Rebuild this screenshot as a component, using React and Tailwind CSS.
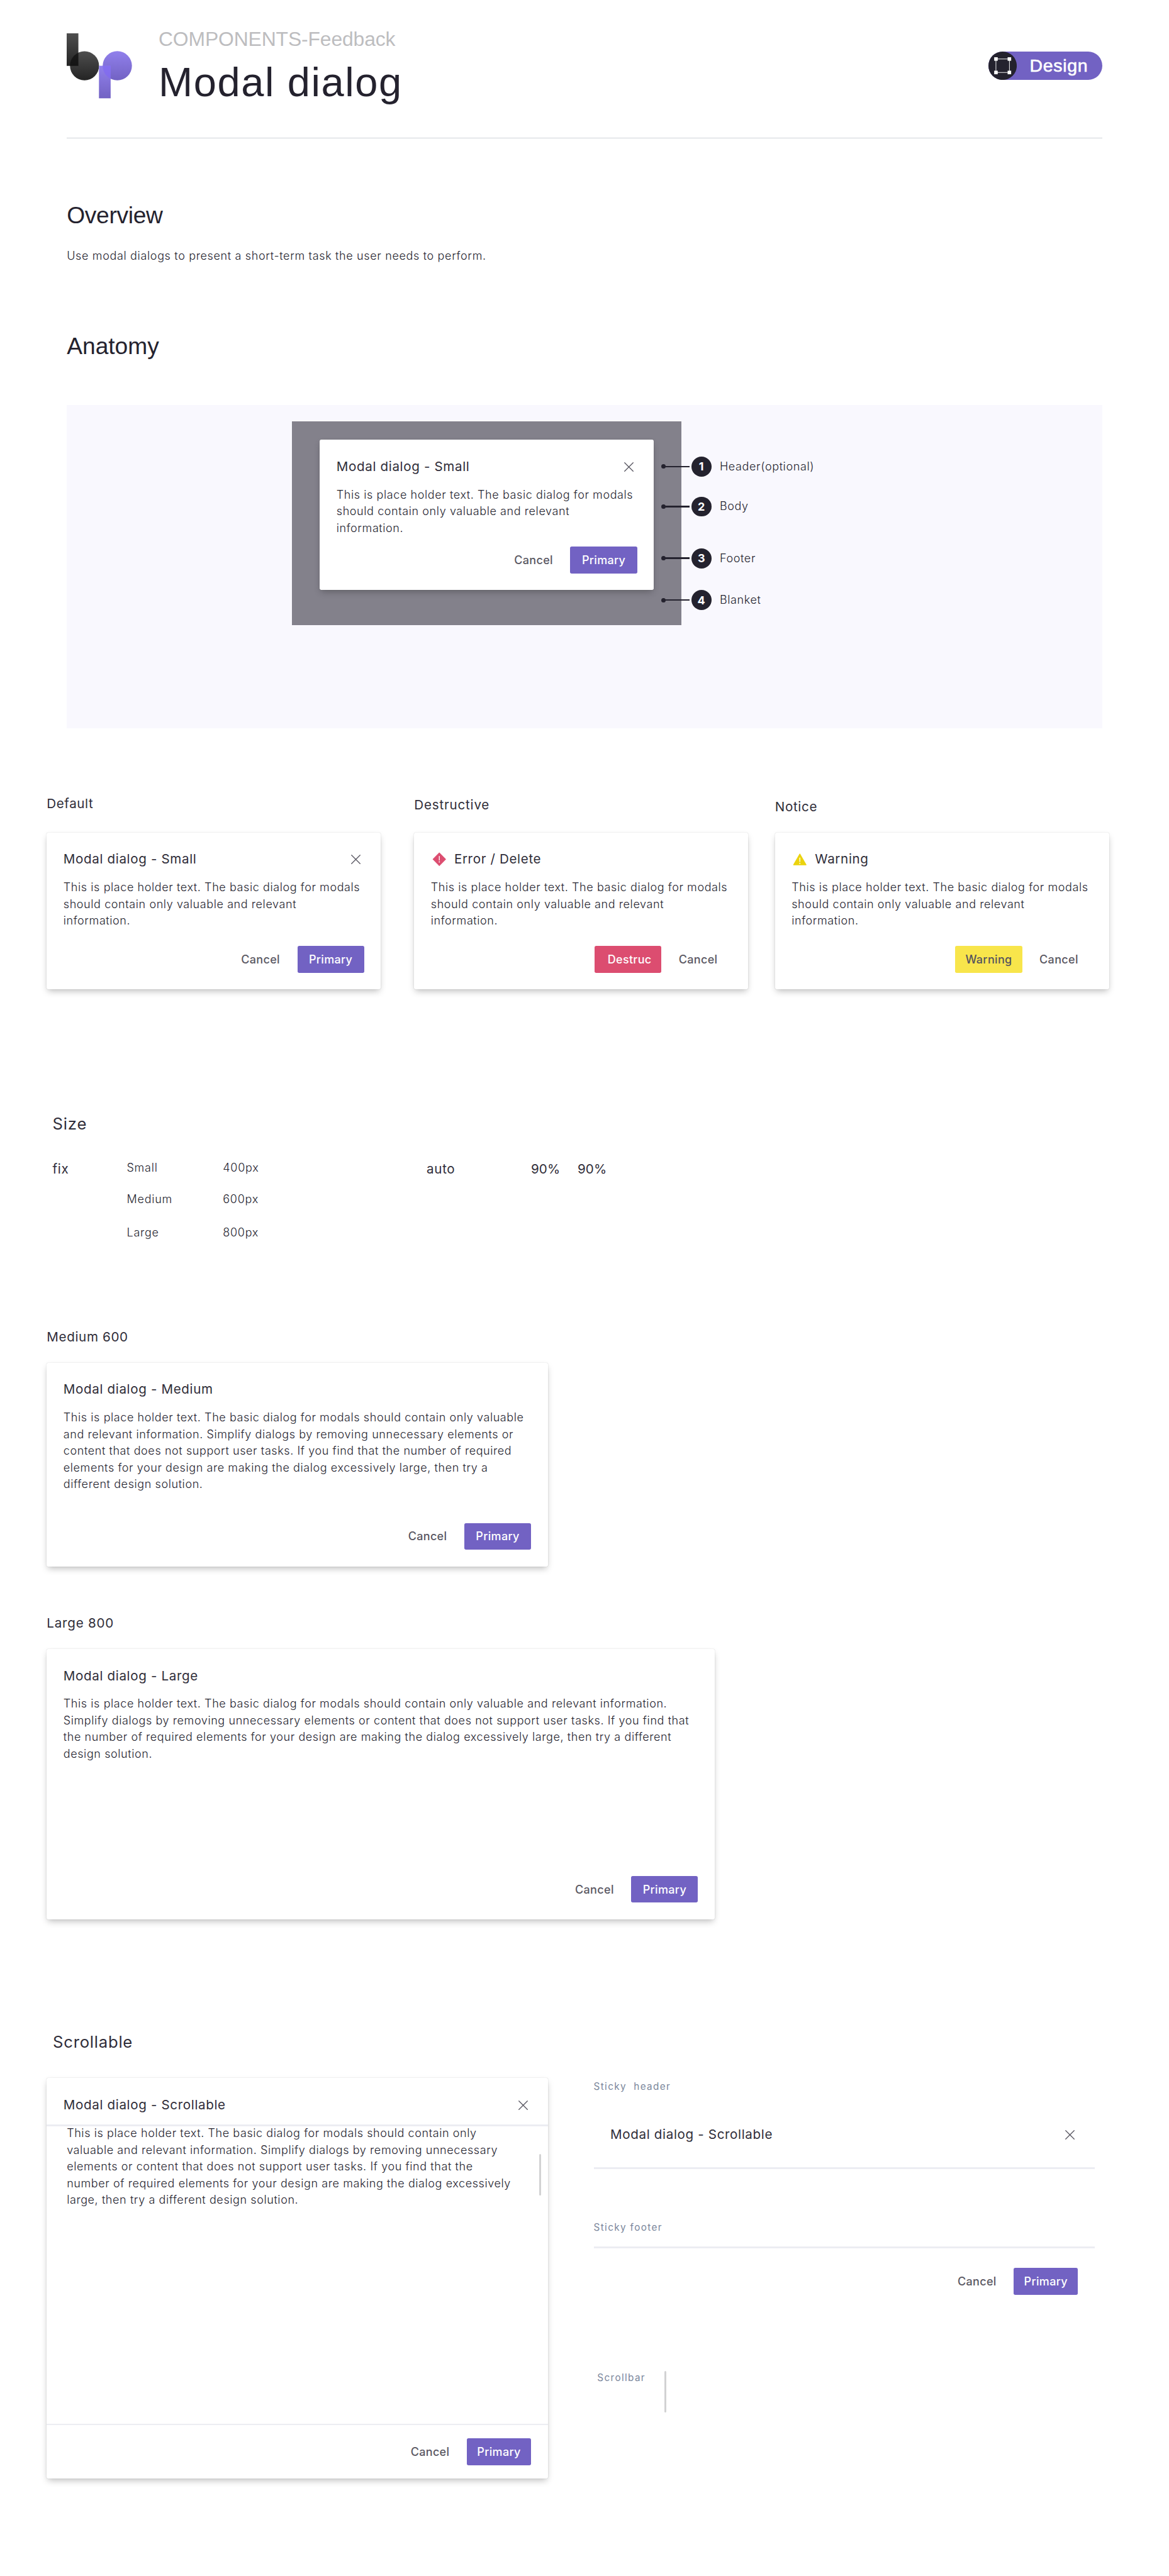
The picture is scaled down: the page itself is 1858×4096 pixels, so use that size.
import React from 'react';

const SMALL_TEXT = [
  'This is place holder text. The basic dialog for modals',
  'should contain only valuable and relevant',
  'information.',
];

const MEDIUM_TEXT = [
  'This is place holder text. The basic dialog for modals should contain only valuable',
  'and relevant information. Simplify dialogs by removing unnecessary elements or',
  'content that does not support user tasks. If you find that the number of required',
  'elements for your design are making the dialog excessively large, then try a',
  'different design solution.',
];

const LARGE_TEXT = [
  'This is place holder text. The basic dialog for modals should contain only valuable and relevant information.',
  'Simplify dialogs by removing unnecessary elements or content that does not support user tasks. If you find that',
  'the number of required elements for your design are making the dialog excessively large, then try a different',
  'design solution.',
];

const SCROLL_TEXT = [
  'This is place holder text. The basic dialog for modals should contain only',
  'valuable and relevant information. Simplify dialogs by removing unnecessary',
  'elements or content that does not support user tasks. If you find that the',
  'number of required elements for your design are making the dialog excessively',
  'large, then try a different design solution.',
];

function Logo() {
  return (
    <svg viewBox="0 0 156 156" className="mt-[53.1px] h-[103.5px] w-[103.5px] shrink-0 overflow-visible">
      <defs>
        <linearGradient id="ink" x1="0" y1="0" x2="0" y2="1">
          <stop offset="0" stopColor="#111111" stopOpacity="0.74" />
          <stop offset="1" stopColor="#111111" stopOpacity="0.92" />
        </linearGradient>
        <linearGradient id="violet" x1="0" y1="0" x2="0" y2="1">
          <stop offset="0" stopColor="#9180ec" />
          <stop offset="1" stopColor="#7262c3" />
        </linearGradient>
        <clipPath id="bowl">
          <circle cx="121.3" cy="77.7" r="35" />
        </clipPath>
      </defs>
      <circle cx="42.7" cy="77.7" r="34.8" fill="url(#ink)" />
      <rect width="28" height="78" fill="url(#ink)" />
      <circle cx="121.3" cy="77.7" r="35" fill="url(#violet)" />
      <rect x="77.3" y="77.7" width="28" height="78" fill="url(#violet)" />
      <rect x="77.3" y="77.7" width="28" height="78" fill="#8069f0" opacity="0.75" clipPath="url(#bowl)" />
    </svg>
  );
}

function FrameIcon() {
  return (
    <svg viewBox="0 0 68 68" className="h-[45.1px] w-[45.1px] shrink-0">
      <circle cx="34" cy="34" r="34" fill="#24222e" />
      <rect x="18" y="17.8" width="32.3" height="32.3" fill="none" stroke="#ffffff" strokeWidth="1.4" />
      <g fill="#ffffff">
        <rect x="13.8" y="13.6" width="8.5" height="8.5" />
        <rect x="46" y="13.6" width="8.5" height="8.5" />
        <rect x="13.8" y="45.9" width="8.5" height="8.5" />
        <rect x="46" y="45.9" width="8.5" height="8.5" />
      </g>
    </svg>
  );
}

function CloseIcon() {
  return (
    <svg viewBox="0 0 40 40" className="h-[26.5px] w-[26.5px] shrink-0" fill="none" stroke="#55535e" strokeWidth="2" strokeLinecap="round">
      <path d="M10.2 10.2L30.6 30.6M30.6 10.2L10.2 30.6" />
    </svg>
  );
}

function ErrorIcon() {
  return (
    <svg viewBox="0 0 40 40" className="mr-[10.6px] h-[26.5px] w-[26.5px] shrink-0">
      <path d="M20 4.8L35.2 20L20 35.2L4.8 20Z" fill="#dc4d70" stroke="#dc4d70" strokeWidth="1.6" strokeLinejoin="round" />
      <path d="M20 13V22.2" stroke="#ffffff" strokeWidth="2" strokeLinecap="round" />
      <circle cx="20" cy="26.4" r="1.4" fill="#ffffff" />
    </svg>
  );
}

function WarningIcon() {
  return (
    <svg viewBox="0 0 40 40" className="mr-[10.6px] h-[26.5px] w-[26.5px] shrink-0">
      <path d="M20 7.6L34.8 33.4H5.2Z" fill="#ebd30e" stroke="#ebd30e" strokeWidth="2.2" strokeLinejoin="round" />
      <path d="M20 17V25.6" stroke="#ffffff" strokeWidth="2" strokeLinecap="round" />
      <circle cx="20" cy="30" r="1.4" fill="#ffffff" />
    </svg>
  );
}

function Title({ children }) {
  return <h3 className="text-[20.6px] leading-[26.5px] tracking-[0.64px] whitespace-nowrap text-[#2f2d39]">{children}</h3>;
}

function Body({ lines }) {
  return (
    <p className="text-[18px] leading-[26.54px] font-light tracking-[0.585px] whitespace-nowrap text-[#25242f]">
      {lines.map((line) => (
        <span key={line} className="block">{line}</span>
      ))}
    </p>
  );
}

const BUTTON = 'flex h-[42.5px] shrink-0 items-center justify-center rounded-[2.7px] text-[18px] font-medium tracking-[0.33px]';

function Cancel() {
  return <button className={`${BUTTON} w-[106.2px] text-[#595762]`}>Cancel</button>;
}

function Primary({ narrow }) {
  return <button className={`${BUTTON} bg-[#7262c3] text-white ${narrow ? 'w-[102.2px]' : 'w-[106.2px]'}`}>Primary</button>;
}

const SHADOW = 'shadow-[0_5.3px_10.6px_-2.6px_rgba(0,0,0,0.26),0_0_1.4px_rgba(0,0,0,0.22)]';

function Dialog({ size, icon, title, close, lines, children }) {
  return (
    <div className={`flex flex-col rounded-[2.7px] bg-white px-[26.5px] pt-[29.7px] pb-[26.5px] ${SHADOW} ${size}`}>
      <div className="mb-[18.2px] flex items-center">
        {icon}
        <Title>{title}</Title>
        {close && <div className="ml-auto"><CloseIcon /></div>}
      </div>
      <Body lines={lines} />
      <div className="mt-auto flex justify-end gap-[5.3px]">{children}</div>
    </div>
  );
}

function Note({ number, label, offset }) {
  return (
    <div className={`flex h-[31.85px] items-center ${offset}`}>
      <span className="h-[7px] w-[7px] rounded-full bg-[#24222e]" />
      <span className="-ml-[3px] h-[2.6px] w-[41.5px] bg-[#24222e]" />
      <span className="ml-[2.3px] flex h-[31.85px] w-[31.85px] items-center justify-center rounded-full bg-[#24222e] text-[18px] font-bold text-white">{number}</span>
      <span className="ml-[13.3px] text-[18px] leading-[26.5px] font-light tracking-[0.62px] text-[#25242f]">{label}</span>
    </div>
  );
}

function Label({ children, className = '' }) {
  return <h4 className={`text-[20.6px] leading-[26.5px] text-[#2f2d39] ${className}`}>{children}</h4>;
}

function Caption({ children, className = '' }) {
  return <div className={`text-[15.3px] leading-[20px] tracking-[1.35px] whitespace-pre text-[#7b879c] ${className}`}>{children}</div>;
}

const SECTION = "font-['Liberation_Sans',sans-serif] text-[37.16px] leading-[48px] text-[#24222e]";

export default function App() {
  return (
    <main className="h-[4096px] w-[1858px] overflow-hidden bg-white font-['Inter',sans-serif]">
      <header className="mx-[106.2px] flex h-[219.5px] items-start border-b border-[#cfd3da]">
        <Logo />
        <div className="ml-[42.3px] pt-[42px] font-['Liberation_Sans',sans-serif] whitespace-nowrap">
          <div className="text-[31.85px] leading-[40px] tracking-[-0.12px] text-[#bdbdbf]">COMPONENTS-Feedback</div>
          <h1 className="mt-[10.5px] text-[65px] leading-[76px] tracking-[1.6px] text-[#24222e]">Modal dialog</h1>
        </div>
        <div className="mt-[82.3px] ml-auto flex h-[45.1px] w-[180.5px] items-center rounded-full bg-[#7262c3]">
          <FrameIcon />
          <span className="ml-[20px] font-['Liberation_Sans',sans-serif] text-[28.5px] leading-[43px] tracking-[0.7px] text-white [-webkit-text-stroke:0.6px_white]">Design</span>
        </div>
      </header>

      <section className="mx-[106.2px] mt-[98px]">
        <h2 className={`${SECTION} tracking-[-0.3px]`}>Overview</h2>
        <p className="mt-[28.6px] text-[18px] leading-[26.5px] font-light tracking-[0.65px] text-[#25242f]">Use modal dialogs to present a short-term task the user needs to perform.</p>
      </section>

      <section className="mx-[106.2px] mt-[105px]">
        <h2 className={SECTION}>Anatomy</h2>
        <div className="mt-[70.1px] flex h-[514px] items-start bg-[#f9f8fe] pt-[26.5px] pl-[358.3px]">
          <div className="h-[323.8px] w-[618.4px] bg-[#83818b] pt-[29.2px] pl-[43.8px]">
            <Dialog size="h-[238.9px] w-[530.9px]" title="Modal dialog - Small" close lines={SMALL_TEXT}>
              <Cancel />
              <Primary />
            </Dialog>
          </div>
          <div className="-ml-[31.9px] pt-[55.7px]">
            <Note number="1" label="Header(optional)" offset="" />
            <Note number="2" label="Body" offset="mt-[31.9px]" />
            <Note number="3" label="Footer" offset="mt-[50.4px]" />
            <Note number="4" label="Blanket" offset="mt-[34.5px]" />
          </div>
        </div>
      </section>

      <section className="mt-[106.9px] flex pl-[74.3px]">
        <div className="w-[530.9px]">
          <Label className="mb-[32.6px] tracking-[0.58px]">Default</Label>
          <Dialog size="h-[249.5px]" title="Modal dialog - Small" close lines={SMALL_TEXT}>
            <Cancel />
            <Primary />
          </Dialog>
        </div>
        <div className="ml-[53.1px] w-[530.9px]">
          <Label className="mt-[2.6px] mb-[30px] tracking-[0.8px]">Destructive</Label>
          <Dialog size="h-[249.5px]" icon={<ErrorIcon />} title="Error / Delete" lines={SMALL_TEXT}>
            <button className={`${BUTTON} w-[106.2px] bg-[#dc4d70] pl-[5px] text-white`}>Destruc</button>
            <Cancel />
          </Dialog>
        </div>
        <div className="ml-[42.5px] w-[530.9px]">
          <Label className="mt-[5.3px] mb-[27.3px] tracking-[0.7px]">Notice</Label>
          <Dialog size="h-[249.5px]" icon={<WarningIcon />} title="Warning" lines={SMALL_TEXT}>
            <button className={`${BUTTON} w-[106.2px] bg-[#f8e54b] text-[#55535e]`}>Warning</button>
            <Cancel />
          </Dialog>
        </div>
      </section>

      <section className="mt-[197.8px] pl-[83.5px]">
        <h2 className="text-[25.7px] leading-[32px] tracking-[0.8px] text-[#2f2d39]">Size</h2>
        <div className="mt-[41.4px] grid h-[128.7px] grid-cols-[118px_152.7px_323.8px_166px_74px_80px] items-start">
          <Label className="mt-[1.6px] tracking-[0.7px]">fix</Label>
          <div className="text-[18px] leading-[26.5px] font-light tracking-[0.75px] text-[#25242f]">
            <div>Small</div>
            <div className="mt-[22.9px]">Medium</div>
            <div className="mt-[26.3px]">Large</div>
          </div>
          <div className="text-[18px] leading-[26.5px] font-light tracking-[0.75px] text-[#25242f]">
            <div>400px</div>
            <div className="mt-[22.9px]">600px</div>
            <div className="mt-[26.3px]">800px</div>
          </div>
          <Label className="mt-[1.6px] tracking-[0.7px]">auto</Label>
          <Label className="mt-[1.6px] tracking-[0.1px]">90%</Label>
          <Label className="mt-[1.6px] tracking-[0.1px]">90%</Label>
        </div>
      </section>

      <section className="mt-[139.7px] pl-[74.3px]">
        <Label className="mb-[27.5px] tracking-[0.64px]">Medium 600</Label>
        <Dialog size="h-[323.8px] w-[796.3px]" title="Modal dialog - Medium" lines={MEDIUM_TEXT}>
          <Cancel />
          <Primary />
        </Dialog>
        <Label className="mt-[77.3px] mb-[27.6px] tracking-[0.78px]">Large 800</Label>
        <Dialog size="h-[430px] w-[1061.7px]" title="Modal dialog - Large" lines={LARGE_TEXT}>
          <Cancel />
          <Primary />
        </Dialog>
      </section>

      <section className="mt-[179.4px] pl-[74.3px]">
        <h2 className="pl-[9.7px] text-[25.7px] leading-[32px] tracking-[0.75px] text-[#2f2d39]">Scrollable</h2>
        <div className="mt-[40.8px] flex items-start">
          <div className={`relative flex h-[637px] w-[796.3px] flex-col rounded-[2.7px] bg-white ${SHADOW}`}>
            <div className="flex h-[74.3px] shrink-0 items-start justify-between px-[26.5px] pt-[29.7px]">
              <Title>Modal dialog - Scrollable</Title>
              <CloseIcon />
            </div>
            <div className="h-[2.65px] shrink-0 bg-[#ecedf2]" />
            <div className="-mt-[1.9px] pl-[31.85px]">
              <Body lines={SCROLL_TEXT} />
            </div>
            <div className="absolute top-[120.8px] right-[10.6px] h-[66.4px] w-[2.65px] rounded-full bg-[#d2d2d3]" />
            <div className="mt-auto h-[2.65px] shrink-0 bg-[#ecedf2]" />
            <div className="flex justify-end gap-[5.3px] px-[26.5px] py-[21.2px]">
              <Cancel />
              <Primary narrow />
            </div>
          </div>

          <div className="ml-[73px] w-[796.3px] pt-[4.3px]">
            <Caption>{'Sticky  header'}</Caption>
            <div className="mt-[52.3px] flex items-center justify-between px-[26.5px]">
              <Title>Modal dialog - Scrollable</Title>
              <CloseIcon />
            </div>
            <div className="mt-[38.7px] h-[2.65px] bg-[#ecedf2]" />
            <Caption className="mt-[83.9px]">Sticky footer</Caption>
            <div className="mt-[19.6px] h-[2.65px] bg-[#ecedf2]" />
            <div className="mt-[31.8px] flex justify-end gap-[5.3px] pr-[26.5px]">
              <Cancel />
              <Primary narrow />
            </div>
            <div className="mt-[120.8px] flex pl-[5.7px]">
              <Caption className="w-[107.1px] pt-[1.6px]">Scrollbar</Caption>
              <div className="h-[66.4px] w-[2.65px] rounded-full bg-[#d2d2d3]" />
            </div>
          </div>
        </div>
      </section>
    </main>
  );
}
